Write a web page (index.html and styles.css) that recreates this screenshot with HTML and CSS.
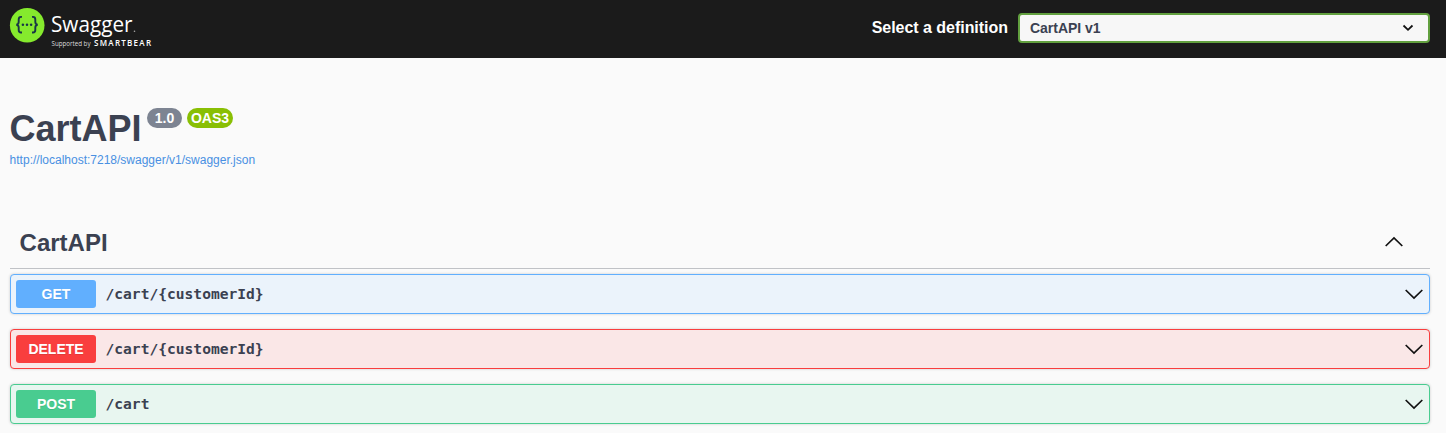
FILE: index.html
```html
<!DOCTYPE html>
<html lang="en">
<head>
<meta charset="utf-8">
<title>Swagger UI</title>
<link rel="stylesheet" href="styles.css">
</head>
<body>
<header class="topbar">
  <a class="logo">
    <svg class="logo-mark" width="36" height="36" viewBox="0 0 36 36">
      <circle cx="18.200" cy="18.300" r="17.3" fill="#85ea2d"/>
      <g fill="none" stroke="#173647" stroke-width="1.9">
        <path d="M13 9.900h-1c-1.700 0-2.300.9-2.300 2.500v2.400c0 1.800-.6 2.700-2.400 2.900 1.800.2 2.400 1.100 2.400 2.900v2.400c0 1.600.6 2.500 2.300 2.500h1"/>
        <path d="M23 9.900h1c1.700 0 2.300.9 2.300 2.500v2.400c0 1.800.6 2.700 2.400 2.900-1.800.2-2.400 1.100-2.400 2.900v2.400c0 1.600-.6 2.500-2.300 2.500h-1"/>
      </g>
      <g fill="#173647"><circle cx="13.900" cy="17.700" r="1.250"/><circle cx="18" cy="17.700" r="1.250"/><circle cx="22.100" cy="17.700" r="1.250"/></g>
    </svg>
    <svg class="logo-words" width="104" height="50" viewBox="0 0 104 50">
      <text class="brand" x="4" y="32" textLength="81.500" lengthAdjust="spacingAndGlyphs">Swagger</text>
      <circle cx="87.500" cy="31.300" r=".8" fill="#aaa"/>
      <text class="support" x="4.500" y="46.300" textLength="39" lengthAdjust="spacingAndGlyphs">Supported by</text>
      <text class="bear" x="47" y="46" textLength="57">SMARTBEAR</text>
    </svg>
  </a>
  <label class="definition">
    <span>Select a definition</span>
    <span class="select">CartAPI v1
      <svg width="12" height="8" viewBox="0 0 12 8"><path d="M1.500 1.500L6 5.800l4.500-4.300" fill="none" stroke="#111" stroke-width="1.800"/></svg>
    </span>
  </label>
</header>
<main class="content">
  <section class="info">
    <h1>CartAPI<span class="badges"><span class="badge version">1.0</span><span class="badge oas">OAS3</span></span></h1>
    <a class="spec-link">http://localhost:7218/swagger/v1/swagger.json</a>
  </section>
  <h2 class="tag">CartAPI
    <svg class="chevron" width="20" height="12" viewBox="0 0 20 12"><path d="M1.700 10L10 2l8.300 8"/></svg>
  </h2>
  <div class="operations">
    <div class="op get"><span class="method">GET</span><span class="path">/cart/{customerId}</span>
      <svg class="chevron" width="20" height="12" viewBox="0 0 20 12"><path d="M1.700 2L10 10l8.300-8"/></svg></div>
    <div class="op delete"><span class="method">DELETE</span><span class="path">/cart/{customerId}</span>
      <svg class="chevron" width="20" height="12" viewBox="0 0 20 12"><path d="M1.700 2L10 10l8.300-8"/></svg></div>
    <div class="op post"><span class="method">POST</span><span class="path">/cart</span>
      <svg class="chevron" width="20" height="12" viewBox="0 0 20 12"><path d="M1.700 2L10 10l8.300-8"/></svg></div>
  </div>
</main>
</body>
</html>
```
FILE: styles.css
```css
* { box-sizing: border-box; }
body {
  margin: 0;
  height: 433px;
  overflow: hidden;
  background: #fafafa;
  color: #3b4151;
  font-family: "Liberation Sans", Arial, sans-serif;
}
.topbar {
  display: flex;
  justify-content: space-between;
  height: 58px;
  padding: 0 16px 0 9px;
  background: #1b1b1b;
}
.logo { display: flex; align-items: flex-start; }
.logo-mark { margin-top: 7px; }
.logo-words { margin-left: 2px; overflow: visible; fill: #fff; font-family: "Open Sans", sans-serif; }
.brand { font-size: 22.5px; font-weight: 400; }
.support { font-size: 6.5px; fill: #ddd; }
.bear { font-size: 8px; font-weight: 600; }
.definition {
  display: flex;
  align-items: center;
  height: 56px;
  gap: 10px;
  color: #fff;
  font-size: 16px;
  font-weight: 700;
  letter-spacing: -.03px;
}
.select {
  display: flex;
  align-items: center;
  justify-content: space-between;
  width: 412px;
  height: 30px;
  padding: 0 14px 0 10px;
  border: 2px solid #62a03f;
  border-radius: 4px;
  background: #f7f7f7;
  color: #3b4151;
  font-size: 14px;
}
.content { padding: 0 16px 0 10px; }
.info { height: 160px; padding-top: 50px; }
h1 { display: flex; margin: 0 0 0 -.5px; font-size: 36px; line-height: 42px; }
.badges { display: flex; gap: 5px; margin-left: 5.5px; }
.badge {
  height: 20px;
  border-radius: 10px;
  color: #fff;
  font-size: 14px;
  line-height: 20px;
  text-align: center;
}
.version { width: 35px; background: #7d8492; }
.oas { width: 46px; background: #89bf04; }
.spec-link { display: block; margin: 2px 0 0 -.4px; color: #4990e2; font-size: 12px; line-height: 16px; }
.tag {
  display: flex;
  align-items: center;
  justify-content: space-between;
  height: 51px;
  margin: 0 0 5px;
  padding: 0 26px 0 9.6px;
  border-bottom: 1px solid rgba(59, 65, 81, .3);
  font-size: 24px;
}
.chevron { fill: none; stroke: #111; stroke-width: 1.7; }
.tag .chevron { margin-bottom: 2px; }
.operations { display: grid; gap: 15px; }
.op {
  display: flex;
  align-items: center;
  height: 40px;
  padding: 0 5px;
  border: 1px solid;
  border-radius: 4px;
  box-shadow: 0 0 3px rgba(0, 0, 0, .19);
}
.method {
  width: 80px;
  height: 28px;
  border-radius: 3px;
  color: #fff;
  font-size: 14px;
  font-weight: 700;
  line-height: 28px;
  text-align: center;
  text-shadow: 0 1px 0 rgba(0, 0, 0, .1);
}
.path { flex: 1; padding: 0 0 2px 9.5px; font: 700 14.6px "DejaVu Sans Mono", monospace; }
.get { border-color: #61affe; background: #ebf3fb; }
.get .method { background: #61affe; }
.delete { border-color: #f93e3e; background: #fae7e7; }
.delete .method { background: #f93e3e; }
.post { border-color: #49cc90; background: #e8f6f0; }
.post .method { background: #49cc90; }
```
